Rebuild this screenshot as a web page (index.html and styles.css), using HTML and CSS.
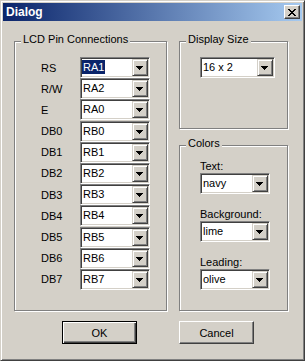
FILE: index.html
```html
<!DOCTYPE html>
<html lang="en">
<head>
    <meta charset="UTF-8">
    <meta name="viewport" content="width=device-width, initial-scale=1.0">
    <title>Dialog</title>
    <link rel="stylesheet" href="styles.css">
</head>
<body>
    <div class="window">
        <div class="titlebar">
            <span class="title">Dialog</span>
            <div class="close">
                <svg width="8" height="7" viewBox="0 0 8 7" shape-rendering="crispEdges">
                    <path d="M0 0h2v1h-2z M6 0h2v1h-2z M1 1h2v1h-2z M5 1h2v1h-2z M2 2h4v1h-4z M3 3h2v1h-2z M2 4h4v1h-4z M1 5h2v1h-2z M5 5h2v1h-2z M0 6h2v1h-2z M6 6h2v1h-2z" fill="#000"/>
                </svg>
            </div>
        </div>

        <div class="client">
            <div class="group pins">
                <span class="legend">LCD Pin Connections</span>
                <div class="pin-list">
                    <div class="pin-row"><span class="pin-label">RS</span><div class="combo"><span class="value"><span class="selected">RA1</span></span><span class="drop"></span></div></div>
                    <div class="pin-row"><span class="pin-label">R/W</span><div class="combo"><span class="value">RA2</span><span class="drop"></span></div></div>
                    <div class="pin-row"><span class="pin-label">E</span><div class="combo"><span class="value">RA0</span><span class="drop"></span></div></div>
                    <div class="pin-row"><span class="pin-label">DB0</span><div class="combo"><span class="value">RB0</span><span class="drop"></span></div></div>
                    <div class="pin-row"><span class="pin-label">DB1</span><div class="combo"><span class="value">RB1</span><span class="drop"></span></div></div>
                    <div class="pin-row"><span class="pin-label">DB2</span><div class="combo"><span class="value">RB2</span><span class="drop"></span></div></div>
                    <div class="pin-row"><span class="pin-label">DB3</span><div class="combo"><span class="value">RB3</span><span class="drop"></span></div></div>
                    <div class="pin-row"><span class="pin-label">DB4</span><div class="combo"><span class="value">RB4</span><span class="drop"></span></div></div>
                    <div class="pin-row"><span class="pin-label">DB5</span><div class="combo"><span class="value">RB5</span><span class="drop"></span></div></div>
                    <div class="pin-row"><span class="pin-label">DB6</span><div class="combo"><span class="value">RB6</span><span class="drop"></span></div></div>
                    <div class="pin-row"><span class="pin-label">DB7</span><div class="combo"><span class="value">RB7</span><span class="drop"></span></div></div>
                </div>
            </div>

            <div class="side">
                <div class="group size">
                    <span class="legend">Display Size</span>
                    <div class="combo wide"><span class="value">16 x 2</span><span class="drop"></span></div>
                </div>
                <div class="group colors">
                    <span class="legend">Colors</span>
                    <div class="color-item">
                        <span class="field-label">Text:</span>
                        <div class="combo"><span class="value">navy</span><span class="drop"></span></div>
                    </div>
                    <div class="color-item">
                        <span class="field-label">Background:</span>
                        <div class="combo"><span class="value">lime</span><span class="drop"></span></div>
                    </div>
                    <div class="color-item">
                        <span class="field-label">Leading:</span>
                        <div class="combo"><span class="value">olive</span><span class="drop"></span></div>
                    </div>
                </div>
            </div>

            <div class="btn-cell ok-cell"><div class="btn default">OK</div></div>
            <div class="btn-cell"><div class="btn">Cancel</div></div>
        </div>
    </div>
</body>
</html>
```

FILE: styles.css
```css
body {
    margin: 0;
    font-family: 'Liberation Sans', Arial, sans-serif;
    font-size: 11px;
    color: #000000;
    background-color: #d4d0c8;
}

.window {
    width: 305px;
    height: 361px;
    box-sizing: border-box;
    padding: 2px;
    background-color: #d4d0c8;
    border: 1px solid;
    border-color: #d4d0c8 #404040 #404040 #d4d0c8;
    box-shadow: inset 1px 1px 0 #ffffff, inset -1px -1px 0 #808080;
}

.titlebar {
    height: 18px;
    margin-bottom: 1px;
    display: flex;
    align-items: center;
    justify-content: space-between;
    padding: 0 2px 0 3px;
    background: linear-gradient(to right, #0a246a, #a6caf0);
}

.title {
    font-weight: bold;
    font-size: 12px;
    color: #ffffff;
}

.close {
    width: 16px;
    height: 14px;
    box-sizing: border-box;
    display: flex;
    align-items: center;
    justify-content: center;
    padding-right: 1px;
    background-color: #d4d0c8;
    border: 1px solid;
    border-color: #ffffff #404040 #404040 #ffffff;
    box-shadow: inset -1px -1px 0 #808080;
}

.close svg {
    display: block;
}

.client {
    display: grid;
    grid-template-columns: 153px 109px;
    column-gap: 12px;
    padding: 19px 0 0 11px;
}

/* etched group box */
.group {
    position: relative;
    box-sizing: border-box;
    border: 1px solid #808080;
    box-shadow: inset 1px 1px 0 #ffffff, 1px 1px 0 #ffffff;
}

.legend {
    position: absolute;
    top: -9px;
    left: 6px;
    padding: 0 2px;
    line-height: 13px;
    background-color: #d4d0c8;
}

.pins {
    height: 270px;
    padding: 15px 0 0 26px;
}

.pin-list {
    display: flex;
    flex-direction: column;
    gap: 0.2px;
}

.pin-row {
    display: flex;
    align-items: center;
}

.pin-label {
    width: 39px;
}

.side {
    display: flex;
    flex-direction: column;
    gap: 16px;
}

.size {
    height: 88px;
    padding: 15px 0 0 20px;
}

.colors {
    height: 166px;
    padding: 13px 0 0 20px;
}

.color-item {
    margin-bottom: 13px;
}

.field-label {
    display: block;
    line-height: 14px;
}

/* combo box */
.combo {
    width: 70px;
    height: 21px;
    box-sizing: border-box;
    display: flex;
    padding: 1px;
    background-color: #ffffff;
    border: 1px solid;
    border-color: #808080 #ffffff #ffffff #808080;
    box-shadow: inset 1px 1px 0 #404040, inset -1px -1px 0 #d4d0c8;
}

.combo.wide {
    width: 75px;
}

.value {
    flex: 1;
    line-height: 17px;
    padding-left: 1px;
    white-space: nowrap;
}

.selected {
    margin-left: -1px;
    padding: 1px 1px;
    background-color: #0a246a;
    color: #ffffff;
}

.drop {
    width: 16px;
    height: 17px;
    box-sizing: border-box;
    background-color: #d4d0c8;
    border: 1px solid;
    border-color: #d4d0c8 #404040 #404040 #d4d0c8;
    box-shadow: inset 1px 1px 0 #ffffff, inset -1px -1px 0 #808080;
    background-image: linear-gradient(#000, #000), linear-gradient(#000, #000), linear-gradient(#000, #000), linear-gradient(#000, #000);
    background-repeat: no-repeat;
    background-size: 7px 1px, 5px 1px, 3px 1px, 1px 1px;
    background-position: 3px 6px, 4px 7px, 5px 8px, 6px 9px;
}

/* push buttons */
.btn-cell {
    margin-top: 10px;
}

.ok-cell {
    padding-left: 48px;
}

.btn {
    width: 75px;
    height: 23px;
    box-sizing: border-box;
    display: flex;
    align-items: center;
    justify-content: center;
    border: 1px solid;
    border-color: #ffffff #404040 #404040 #ffffff;
    box-shadow: inset -1px -1px 0 #808080;
}

.btn.default {
    border-color: #000000;
    box-shadow: inset 1px 1px 0 #ffffff, inset -1px -1px 0 #404040, inset -2px -2px 0 #808080;
}
```
